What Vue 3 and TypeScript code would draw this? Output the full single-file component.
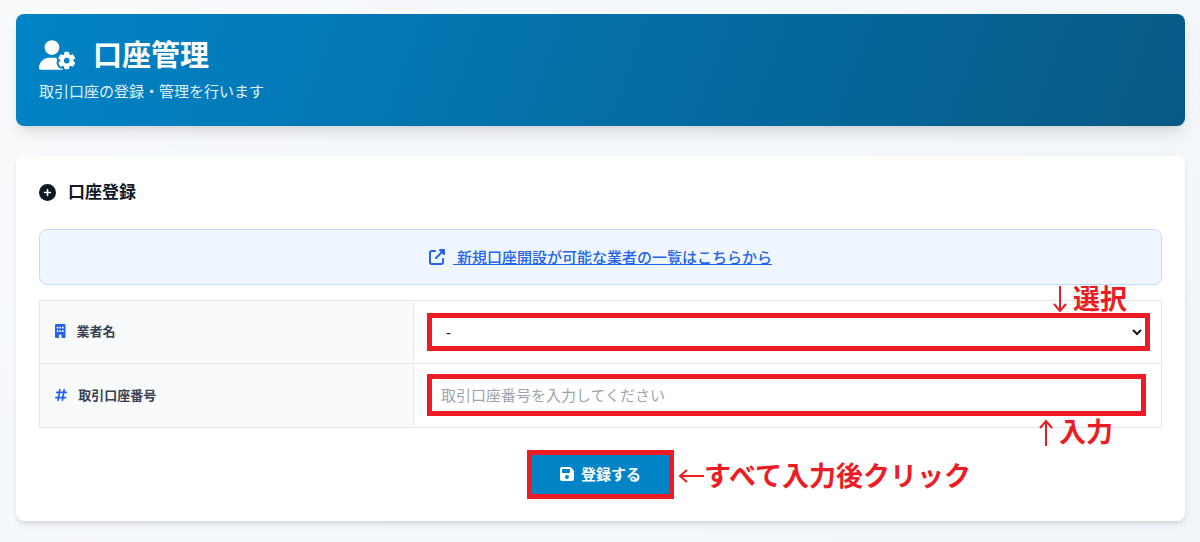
<script setup lang="ts">
import { ref } from 'vue'

const broker = ref('')
const accountNumber = ref('')
</script>

<template>
  <main class="page">
    <header class="hero">
      <h1 class="hero-title">
        <svg class="hero-icon" viewBox="0 0 640 512" aria-hidden="true"><path d="M224 0a128 128 0 1 1 0 256A128 128 0 1 1 224 0zM178.300 304h91.400c11.800 0 23.400 1.200 34.500 3.300c-2.100 18.500 7.400 35.600 21.800 44.800c-16.600 10.600-26.700 31.600-20 53.300c4 12.900 9.400 25.500 16.400 37.600s15.200 23.100 24.400 33c15.700 16.900 39.600 18.400 57.200 8.700v.9c0 9.200 2.700 18.500 7.900 26.300H29.700C13.300 512 0 498.700 0 482.300C0 383.800 79.800 304 178.300 304zM436 218.200c0-7 4.500-13.300 11.300-14.800c10.500-2.400 21.500-3.700 32.700-3.700s22.200 1.300 32.700 3.700c6.800 1.500 11.300 7.800 11.300 14.800v30.600c7.900 3.400 15.400 7.700 22.300 12.800l24.900-14.300c6.100-3.500 13.700-2.700 18.500 2.400c7.600 8.100 14.300 17.200 20.100 27.200s10.300 20.400 13.500 31c2.100 6.700-1.100 13.700-7.200 17.200l-25 14.400c.4 4 .7 8.100 .7 12.300s-.2 8.200-.7 12.300l25 14.400c6.100 3.500 9.200 10.500 7.200 17.200c-3.300 10.600-7.800 21-13.500 31s-12.500 19.100-20.100 27.200c-4.800 5.100-12.500 5.900-18.500 2.400l-24.900-14.300c-6.900 5.100-14.300 9.400-22.300 12.800v30.600c0 7-4.500 13.300-11.300 14.800c-10.500 2.400-21.500 3.700-32.700 3.700s-22.200-1.300-32.700-3.700c-6.800-1.500-11.300-7.800-11.300-14.800V454.800c-8-3.400-15.600-7.700-22.500-12.900l-24.700 14.300c-6.100 3.500-13.700 2.700-18.500-2.400c-7.600-8.100-14.300-17.200-20.100-27.200s-10.300-20.400-13.500-31c-2.100-6.700 1.100-13.700 7.200-17.200l24.800-14.300c-.4-4.100-.7-8.200-.7-12.400s.2-8.300 .7-12.400L343.800 325c-6.100-3.500-9.200-10.500-7.200-17.200c3.300-10.600 7.700-21 13.500-31s12.500-19.100 20.100-27.200c4.800-5.100 12.400-5.900 18.500-2.400l24.800 14.300c6.900-5.100 14.500-9.400 22.500-12.900V218.200zm92.100 133.500a48.100 48.100 0 1 0 -96.100 0 48.100 48.100 0 1 0 96.100 0z" /></svg>
        口座管理
      </h1>
      <p class="hero-text">取引口座の登録・管理を行います</p>
    </header>

    <form class="card" @submit.prevent>
      <h2 class="card-title">
        <svg class="card-icon" viewBox="0 0 512 512" aria-hidden="true"><path d="M256 512A256 256 0 1 0 256 0a256 256 0 1 0 0 512zM232 344V280H168c-13.300 0-24-10.700-24-24s10.700-24 24-24h64V168c0-13.300 10.700-24 24-24s24 10.700 24 24v64h64c13.300 0 24 10.700 24 24s-10.700 24-24 24H280v64c0 13.300-10.700 24-24 24s-24-10.700-24-24z" /></svg>
        口座登録
      </h2>

      <div class="notice">
        <svg class="notice-icon" viewBox="0 0 512 512" aria-hidden="true"><path d="M352 0c-12.900 0-24.600 7.800-29.600 19.800s-2.200 25.700 6.900 34.900L370.700 96 201.400 265.400c-12.500 12.500-12.500 32.800 0 45.300s32.800 12.500 45.300 0L416 141.300l41.400 41.400c9.200 9.200 22.900 11.900 34.900 6.900s19.800-16.600 19.800-29.600V32c0-17.700-14.300-32-32-32H352zM80 32C35.800 32 0 67.800 0 112V432c0 44.200 35.800 80 80 80H400c44.200 0 80-35.800 80-80V320c0-17.700-14.300-32-32-32s-32 14.300-32 32V432c0 8.800-7.200 16-16 16H80c-8.800 0-16-7.200-16-16V112c0-8.800 7.200-16 16-16H192c17.700 0 32-14.300 32-32s-14.300-32-32-32H80z" /></svg>
        <a class="notice-link" href="#brokers">&nbsp;新規口座開設が可能な業者の一覧はこちらから</a>
      </div>

      <table class="fields">
        <tbody>
          <tr>
            <th scope="row">
              <label class="field-label" for="broker">
                <svg class="field-icon" viewBox="0 0 384 512" aria-hidden="true"><path d="M48 0C21.500 0 0 21.500 0 48V464c0 26.500 21.500 48 48 48h96V432c0-26.500 21.500-48 48-48s48 21.500 48 48v80h96c26.500 0 48-21.500 48-48V48c0-26.500-21.500-48-48-48H48zM64 240c0-8.800 7.200-16 16-16h32c8.800 0 16 7.200 16 16v32c0 8.800-7.200 16-16 16H80c-8.800 0-16-7.200-16-16V240zm112-16h32c8.800 0 16 7.200 16 16v32c0 8.800-7.200 16-16 16H176c-8.800 0-16-7.200-16-16V240c0-8.800 7.200-16 16-16zm80 16c0-8.800 7.200-16 16-16h32c8.800 0 16 7.200 16 16v32c0 8.800-7.200 16-16 16H272c-8.800 0-16-7.200-16-16V240zM80 96h32c8.800 0 16 7.200 16 16v32c0 8.800-7.200 16-16 16H80c-8.800 0-16-7.200-16-16V112c0-8.800 7.200-16 16-16zm80 16c0-8.800 7.200-16 16-16h32c8.800 0 16 7.200 16 16v32c0 8.800-7.200 16-16 16H176c-8.800 0-16-7.200-16-16V112zM272 96h32c8.800 0 16 7.200 16 16v32c0 8.800-7.200 16-16 16H272c-8.800 0-16-7.200-16-16V112c0-8.800 7.200-16 16-16z" /></svg>
                業者名
              </label>
            </th>
            <td>
              <div class="field field-select">
                <select id="broker" v-model="broker" class="control control-select">
                  <option value="">-</option>
                </select>
                <span class="note note-select">
                  <svg class="arrow arrow-vertical" viewBox="0 0 14 27" aria-hidden="true"><path d="M7 0V25M1 18L7 25L13 18" /></svg>
                  選択
                </span>
              </div>
            </td>
          </tr>
          <tr>
            <th scope="row">
              <label class="field-label" for="account">
                <svg class="field-icon" viewBox="0 0 448 512" aria-hidden="true"><path d="M181.300 32.400c17.400 2.900 29.200 19.400 26.300 36.800L197.800 128h95.100l11.500-69.300c2.900-17.400 19.400-29.200 36.800-26.300s29.200 19.400 26.300 36.800L357.800 128H416c17.700 0 32 14.300 32 32s-14.300 32-32 32H347.100L325.800 320H384c17.700 0 32 14.300 32 32s-14.300 32-32 32H315.100l-11.500 69.300c-2.900 17.400-19.400 29.200-36.800 26.300s-29.200-19.400-26.300-36.800l9.800-58.700H155.100l-11.500 69.300c-2.900 17.400-19.400 29.200-36.800 26.300s-29.200-19.400-26.300-36.800L90.200 384H32c-17.700 0-32-14.300-32-32s14.300-32 32-32h68.900l21.300-128H64c-17.700 0-32-14.300-32-32s14.300-32 32-32h68.900l11.500-69.300c2.900-17.400 19.400-29.200 36.800-26.300zM187.100 192L165.800 320h95.100l21.300-128H187.100z" /></svg>
                取引口座番号
              </label>
            </th>
            <td>
              <div class="field field-input">
                <input id="account" v-model="accountNumber" class="control control-input" type="text" placeholder="取引口座番号を入力してください">
                <span class="note note-input">
                  <svg class="arrow arrow-vertical" viewBox="0 0 14 27" aria-hidden="true"><path d="M7 27V2M1 9L7 2L13 9" /></svg>
                  入力
                </span>
              </div>
            </td>
          </tr>
        </tbody>
      </table>

      <div class="actions">
        <div class="submit-wrap">
          <button class="submit" type="submit">
            <svg class="submit-icon" viewBox="0 0 448 512" aria-hidden="true"><path d="M64 32C28.700 32 0 60.700 0 96V416c0 35.300 28.700 64 64 64H384c35.300 0 64-28.700 64-64V173.300c0-17-6.700-33.300-18.700-45.300L352 50.700C340 38.700 323.700 32 306.700 32H64zm0 96c0-17.700 14.300-32 32-32H288c17.700 0 32 14.300 32 32v64c0 17.700-14.300 32-32 32H96c-17.700 0-32-14.300-32-32V128zM224 288a64 64 0 1 1 0 128 64 64 0 1 1 0-128z" /></svg>
            登録する
          </button>
          <span class="note note-submit">
            <svg class="arrow arrow-horizontal" viewBox="0 0 26 14" aria-hidden="true"><path d="M26 7H2M9 1L2 7L9 13" /></svg>
            すべて入力後クリック
          </span>
        </div>
      </div>
    </form>
  </main>
</template>

<style>
body {
  margin: 0;
  background: linear-gradient(135deg, #f8fafc, #f1f5f9);
}
</style>

<style scoped>
.page {
  box-sizing: border-box;
  min-height: 100vh;
  padding: 14px 15px 21px 16px;
  font-family: "Noto Sans", "Noto Sans CJK JP", sans-serif;
  color: #111827;
}

svg {
  flex: none;
  fill: currentColor;
}

.hero {
  padding: 23px;
  margin-bottom: 30px;
  border-radius: 8px;
  background: linear-gradient(110deg, #0284c7, #075985);
  box-shadow: 0 10px 15px -3px rgba(0, 0, 0, 0.1), 0 4px 6px -4px rgba(0, 0, 0, 0.1);
  color: #fff;
}

.hero-title {
  display: flex;
  align-items: center;
  gap: 17px;
  margin: 0 0 8px;
  font-size: 29px;
  line-height: 35px;
  font-weight: 700;
}

.hero-icon {
  width: 37px;
  height: 30px;
}

.hero-text {
  margin: 0;
  font-size: 15px;
  line-height: 23px;
  color: #e0f2fe;
}

.card {
  padding: 23px 23px 22px;
  border-radius: 8px;
  background: #fff;
  box-shadow: 0 4px 6px -1px rgba(0, 0, 0, 0.1), 0 2px 4px -2px rgba(0, 0, 0, 0.1);
}

.card-title {
  display: flex;
  align-items: center;
  gap: 12px;
  margin: 0 0 24px;
  font-size: 17px;
  line-height: 26px;
  font-weight: 700;
}

.card-icon {
  width: 17px;
  height: 17px;
}

.notice {
  display: flex;
  align-items: center;
  justify-content: center;
  gap: 8px;
  padding: 15px;
  margin-bottom: 15px;
  border: 1px solid #bfdbfe;
  border-radius: 8px;
  background: #eff6ff;
  color: #2563eb;
  font-size: 15px;
  line-height: 24px;
}

.notice-icon {
  width: 16px;
  height: 16px;
}

.notice-link {
  color: inherit;
  font-weight: 500;
  text-decoration: underline;
}

.fields {
  width: 100%;
  border-collapse: collapse;
  table-layout: fixed;
}

.fields th,
.fields td {
  border: 1px solid #e5e7eb;
  text-align: left;
}

.fields th {
  width: 33.333%;
  box-sizing: border-box;
  padding: 0 15px 2px;
  background: #f9fafb;
}

.fields td {
  padding: 12px 0 11px 13px;
}

.fields tr + tr td {
  padding: 10px 0 11px 13px;
}

.field-label {
  display: flex;
  align-items: center;
  gap: 11px;
  font-size: 13px;
  line-height: 20px;
  font-weight: 700;
  color: #374151;
}

.field-icon {
  height: 14px;
  color: #2563eb;
}

.field {
  position: relative;
}

.field-select {
  margin-right: 11px;
}

.field-input {
  margin-right: 15px;
}

.control {
  display: block;
  box-sizing: border-box;
  width: 100%;
  margin: 0;
  border: 5px solid #ed1c24;
  border-radius: 0;
  background: #fff;
  font-family: inherit;
  font-size: 15px;
  color: #111827;
}

.control-select {
  height: 38px;
  padding: 0 0 0 10px;
  margin-bottom: 1px;
}

.control-input {
  height: 42px;
  padding: 0 9px;
}

.control-input::placeholder {
  color: #9ca3af;
  opacity: 1;
}

.actions {
  display: flex;
  justify-content: center;
  margin-top: 22px;
}

.submit-wrap {
  position: relative;
}

.submit {
  display: flex;
  align-items: center;
  justify-content: center;
  gap: 7px;
  width: 147px;
  height: 49px;
  padding: 0 0 2px;
  border: 5px solid #ed1c24;
  background: #0284c7;
  color: #fff;
  font-family: inherit;
  font-size: 15px;
  font-weight: 700;
}

.submit-icon {
  width: 14px;
  height: 16px;
}

.note {
  position: absolute;
  display: flex;
  align-items: center;
  color: #ed1c24;
  font-size: 27px;
  line-height: 32px;
  font-weight: 700;
  white-space: nowrap;
}

.note-select {
  right: 23px;
  bottom: 36px;
  gap: 6px;
}

.note-input {
  right: 33px;
  top: 42px;
  gap: 6px;
}

.note-submit {
  left: 151px;
  top: 10px;
}

.arrow {
  fill: none;
  stroke: currentColor;
  stroke-width: 2;
}

.arrow-vertical {
  width: 14px;
  height: 27px;
}

.arrow-horizontal {
  width: 26px;
  height: 14px;
}
</style>
